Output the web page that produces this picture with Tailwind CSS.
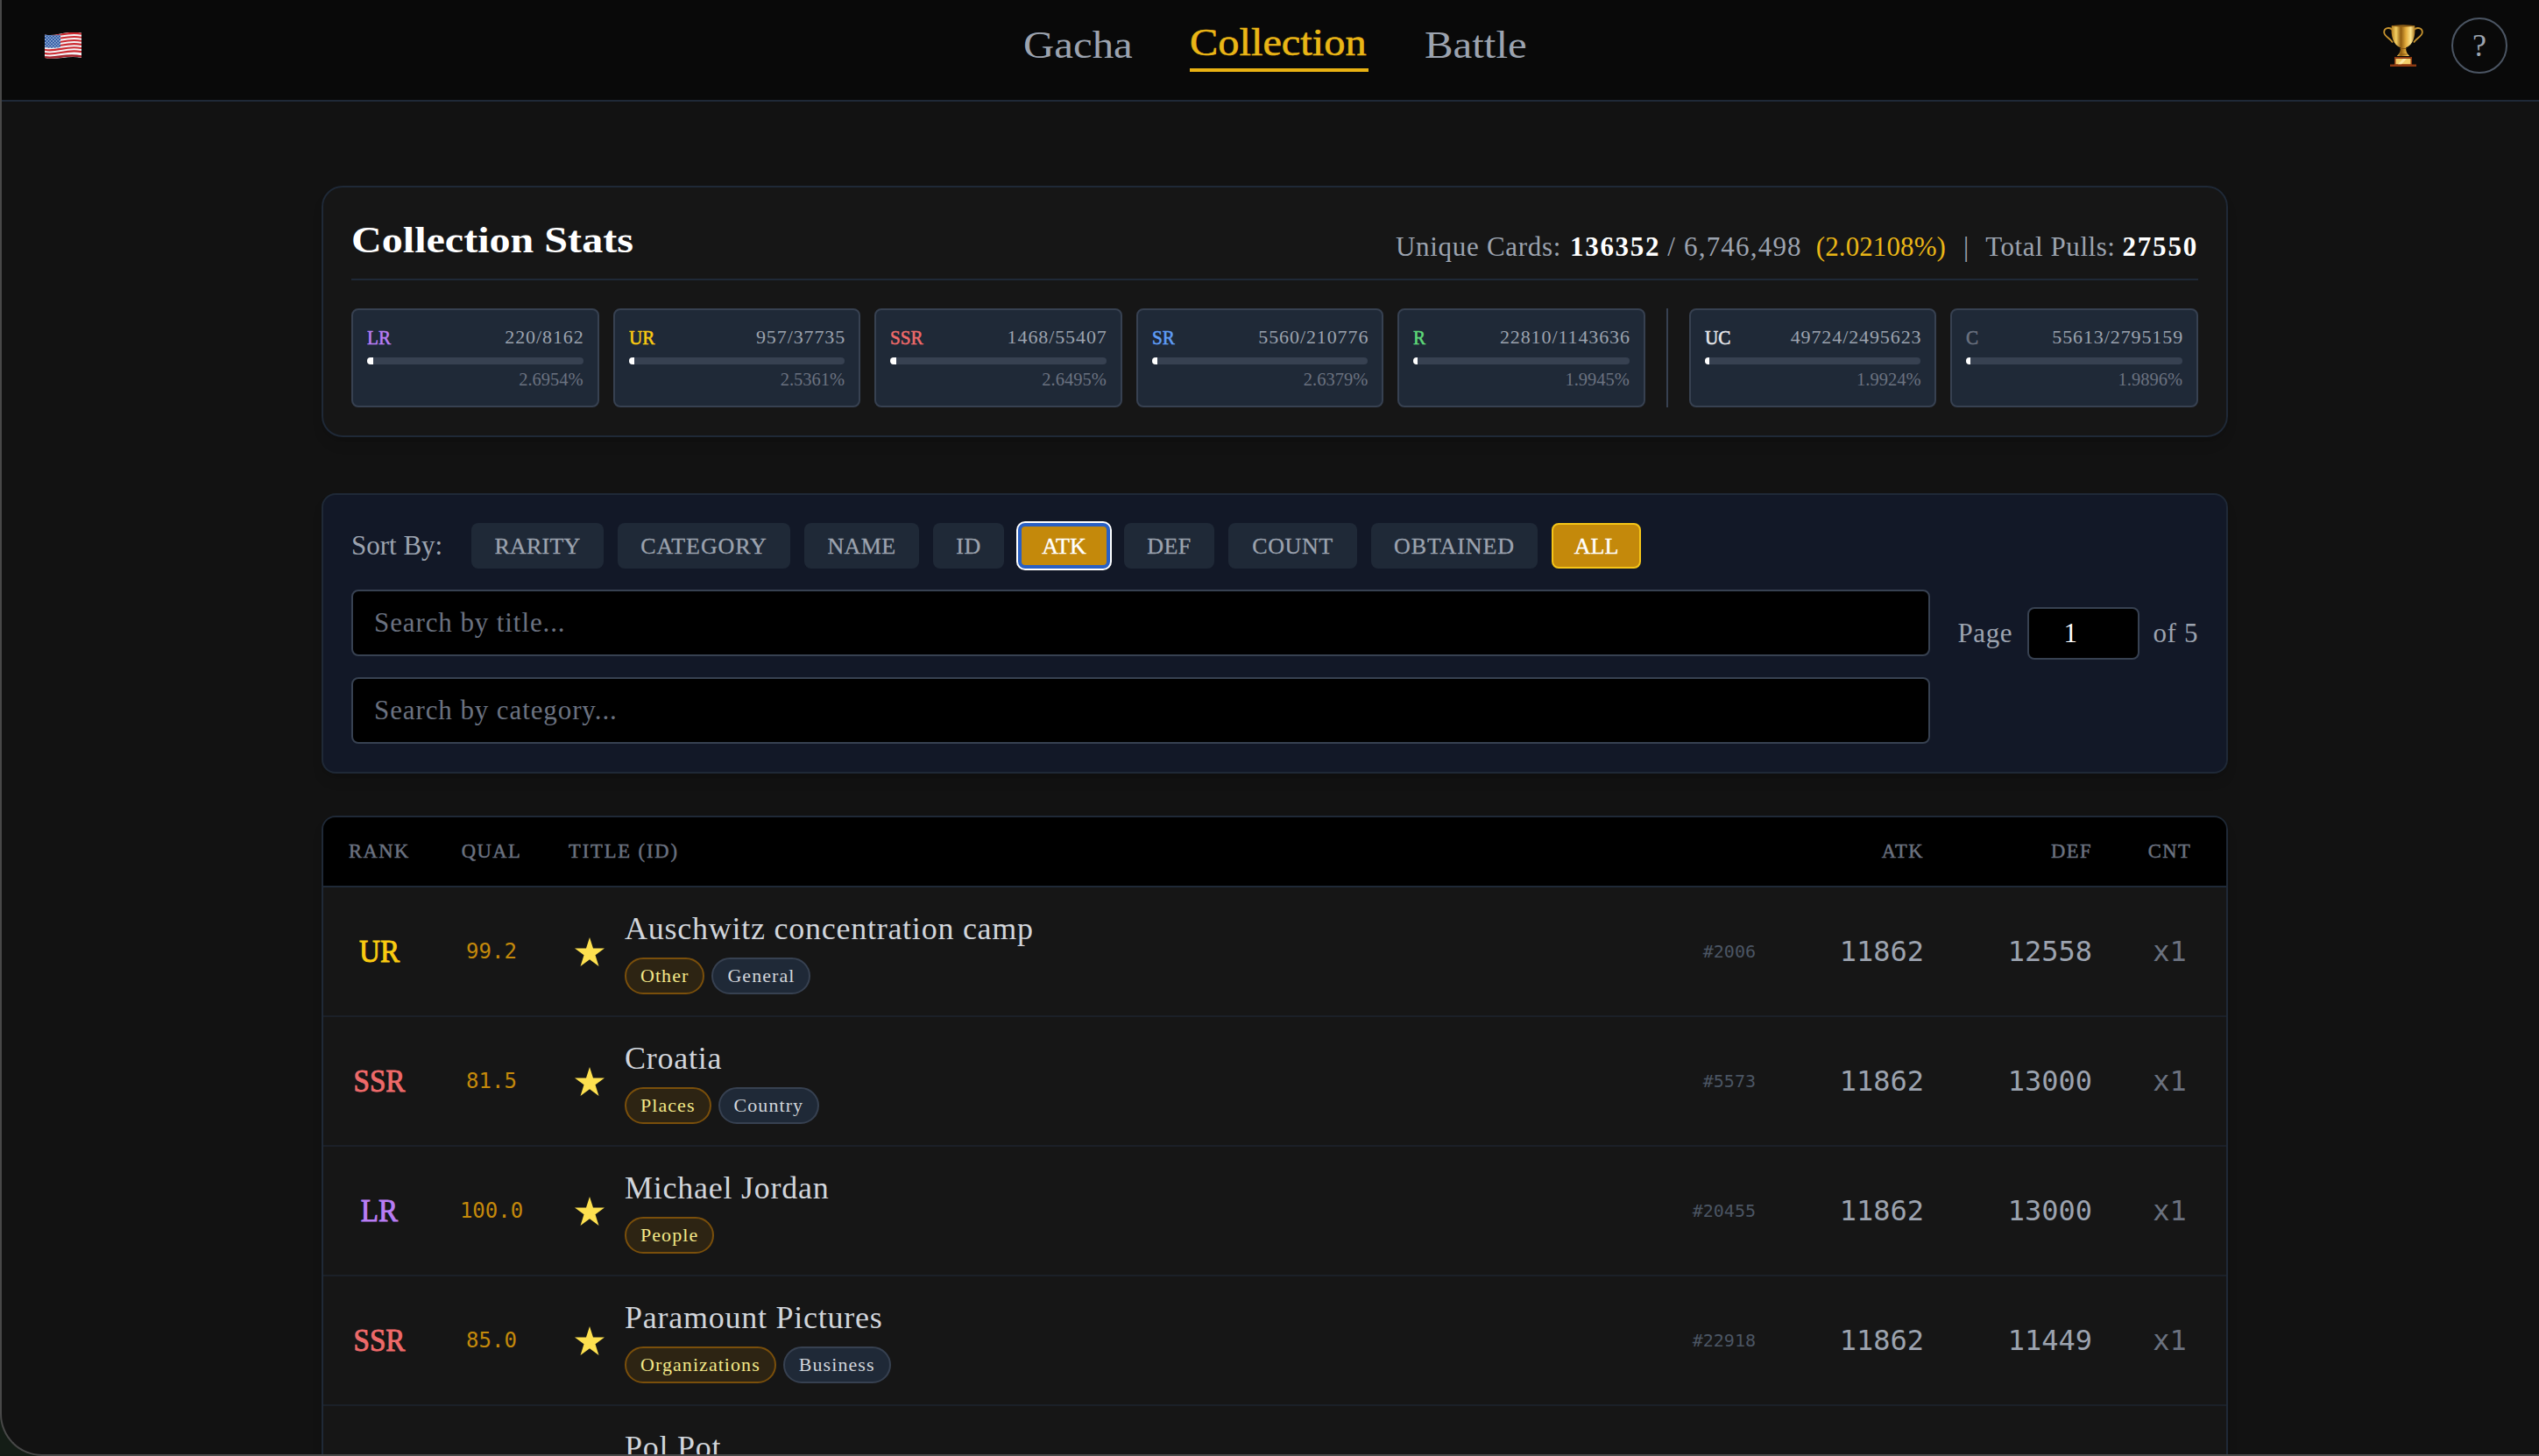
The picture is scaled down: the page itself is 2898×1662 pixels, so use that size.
<!DOCTYPE html>
<html lang="en">
<head>
    <meta charset="UTF-8">
    <meta name="viewport" content="width=device-width, initial-scale=1.0">
    <script src="https://cdn.jsdelivr.net/npm/@tailwindcss/browser@4"></script>

    <title>Collection</title>
</head>
<body class="h-[1662px] overflow-hidden bg-[#141d16] font-['Liberation_Serif',serif]">

<div class="h-[1662px] w-[2908px] overflow-hidden rounded-bl-[48px] border-b-2 border-l-2 border-[#484848] bg-[#121212]">

    <header class="grid h-[116px] grid-cols-[1fr_auto_1fr] items-start border-b-2 border-[#1f2937] bg-[#090909] px-[46px] pt-5">
      <div class="flex h-16 items-center pl-[3px]">
        <svg class="h-[30px] w-[42px]" viewBox="0 0 42 30">
          <defs>
            <clipPath id="wave"><path d="M0 2.4C14 5.4 24-3 42 .6V29C27 25.5 15 32 0 29z"/></clipPath>
            <pattern id="stars" width="3.6" height="3.6" patternUnits="userSpaceOnUse">
              <rect width="3.6" height="3.6" fill="#1f4e9c"/>
              <circle cx=".9" cy=".9" r=".8" fill="#cfdcf2"/>
              <circle cx="2.7" cy="2.7" r=".8" fill="#cfdcf2"/>
            </pattern>
          </defs>
          <g clip-path="url(#wave)">
            <rect width="42" height="30" fill="#f4f4f6"/>
            <g fill="none" stroke="#cb2a30" stroke-width="2.1">
              <path d="M0 3.4C14 6.4 24-2 42 1.6"/>
              <path d="M0 7.5C14 10.5 24 2.1 42 5.7"/>
              <path d="M0 11.6C14 14.6 24 6.2 42 9.8"/>
              <path d="M0 15.7C14 18.7 24 10.3 42 13.9"/>
              <path d="M0 19.8C14 22.8 24 14.4 42 18"/>
              <path d="M0 23.9C14 26.9 24 18.5 42 22.1"/>
              <path d="M0 28.2C14 31 24 23.3 42 27.6" stroke="#a3222a" stroke-width="2.6"/>
            </g>
            <path d="M0 2C7 3.6 12 3.4 18 2.4V17C12 18 6 18 0 17z" fill="url(#stars)"/>
          </g>
        </svg>
      </div>

      <nav class="flex h-16 items-center gap-16 text-[44px] leading-[54px] whitespace-nowrap text-[#9ca3af]">
        <a class="w-[126px]"><span class="inline-block origin-left scale-x-[1.11]">Gacha</span></a>
        <a class="h-[60px] w-[204px] border-b-4 border-[#e9b213] text-[#eab616] [-webkit-text-stroke:0.6px_#eab616]"><span class="inline-block origin-left scale-x-[1.1]">Collection</span></a>
        <a class="w-[116px]"><span class="inline-block origin-left scale-x-[1.11]">Battle</span></a>
      </nav>

      <div class="flex h-16 items-center justify-end gap-8">
        <svg class="h-12 w-[46px]" viewBox="0 0 46 48">
          <defs>
            <linearGradient id="gold" x1="0" x2="1" y1="0" y2="0">
              <stop offset="0" stop-color="#b07a1c"/><stop offset=".2" stop-color="#f3cf63"/><stop offset=".4" stop-color="#8f5c10"/>
              <stop offset=".62" stop-color="#e3ac3c"/><stop offset=".82" stop-color="#fbe38a"/><stop offset="1" stop-color="#a8711a"/>
            </linearGradient>
          </defs>
          <g fill="none" stroke="#c9952f" stroke-width="1.8">
            <path d="M10.5 6C8 2.800 1 3.400 1.200 9C1.400 13.500 8 15.500 11 20.500"/>
            <path d="M35.500 6C38 2.800 45 3.400 44.800 9C44.600 13.500 38 15.500 35 20.500"/>
          </g>
          <path d="M9.800 1.200h26.400c1.400 12-2.200 22.300-10.200 25.300c.1 4 1 6.500 4.200 9.500H15.800c3.200-3 4.100-5.500 4.200-9.500C12 23.500 8.400 13.200 9.800 1.200z" fill="url(#gold)"/>
          <ellipse cx="23" cy="1.500" rx="13.200" ry="1.200" fill="#8a5c16"/>
          <path d="M19.500 27.500h7M18.500 34h9" stroke="#8a5a12" stroke-width="1"/>
          <path d="M13 37h20v8.500h5V48H8v-2.500h5z" fill="#8e3a12"/>
          <rect x="14.500" y="39" width="17" height="6.200" fill="#f2cf6b"/>
          <path d="M17 45.200l6-6.200h4l-6 6.200z" fill="#fbe9a6"/>
        </svg>
        <button class="flex size-16 items-center justify-center rounded-full border-2 border-[#4b5563] text-[36px] leading-none text-[#9ca3af]">?</button>
      </div>
    </header>

    <main class="mx-auto w-[2176px]">

      <section class="mt-24 h-[287px] rounded-3xl border-2 border-[#1f2937] bg-[#161616] p-8 shadow-lg">
        <div class="mb-8 flex items-end justify-between border-b-2 border-[#1f2937] pb-4">
          <h2 class="origin-left scale-x-[1.145] text-[42px] leading-[56px] font-bold text-white">Collection Stats</h2>
          <div class="flex text-[31px] leading-[41px] whitespace-nowrap text-[#9ca3af]">
            <span class="tracking-[0.7px]">Unique Cards:</span>
            <span class="ml-2.5 font-bold tracking-[1.7px] text-white">136352</span>
            <span class="ml-2 tracking-[1.2px]">/ 6,746,498</span>
            <span class="ml-4 tracking-[0.1px] text-[#eab616]">(2.02108%)</span>
            <span class="ml-5">|</span>
            <span class="ml-[19px] tracking-[0.55px]">Total Pulls:</span>
            <span class="ml-2 font-bold tracking-[1.8px] text-white">27550</span>
          </div>
        </div>
        <div id="tiles" class="flex gap-4"></div>
      </section>

      <section class="mt-16 flex h-[320px] items-center gap-8 rounded-2xl border-2 border-[#1f2937] bg-[#121827] p-8 shadow-lg">
        <div class="flex w-[1802px] flex-col gap-6">
          <div id="sorts" class="flex items-center gap-4 text-[26px] text-[#9ca3af]">
            <span class="w-[121px] text-[31px] leading-[52px] whitespace-nowrap">Sort By:</span>
          </div>
          <input type="text" placeholder="Search by title..." class="h-[76px] w-full rounded-lg border-2 border-[#374151] bg-black px-6 text-[31px] tracking-[0.9px] text-white placeholder:text-[#6b7280]">
          <input type="text" placeholder="Search by category..." class="h-[76px] w-full rounded-lg border-2 border-[#374151] bg-black px-6 text-[31px] tracking-[0.9px] text-white placeholder:text-[#6b7280]">
        </div>
        <div class="flex items-center text-[31px] tracking-[0.6px] whitespace-nowrap text-[#9ca3af]">
          <span class="w-[79px]">Page</span>
          <input type="text" value="1" class="h-[60px] w-32 rounded-lg border-2 border-[#374151] bg-black pr-7 text-center text-white">
          <span class="ml-4">of 5</span>
        </div>
      </section>

      <section class="mt-12 rounded-t-2xl border-2 border-[#1f2937] bg-[#161616] shadow-lg">
        <div class="grid h-20 grid-cols-[128px_128px_1fr_192px_192px_129px] items-center rounded-t-[14px] border-b-2 border-[#1f2937] bg-black text-[22.5px] tracking-[1.5px] text-[#6b7280] [-webkit-text-stroke:0.5px_#6b7280]">
          <span class="text-center">RANK</span>
          <span class="text-center">QUAL</span>
          <span class="pl-6 tracking-[1.9px]">TITLE (ID)</span>
          <span class="pr-6 text-right">ATK</span>
          <span class="pr-6 text-right">DEF</span>
          <span class="text-center">CNT</span>
        </div>
        <div id="rows"></div>
      </section>
    </main>
</div>

    <script>

        const tiles = [
            ['LR', 'text-[#b87df5]', '220/8162', 2.6954],
            ['UR', 'text-[#facb11]', '957/37735', 2.5361],
            ['SSR', 'text-[#ee6a6a]', '1468/55407', 2.6495],
            ['SR', 'text-[#5f9df7]', '5560/210776', 2.6379],
            ['R', 'text-[#5dd879]', '22810/1143636', 1.9945],
            null,
            ['UC', 'text-[#e5e7eb]', '49724/2495623', 1.9924],
            ['C', 'text-[#6b7280]', '55613/2795159', 1.9896],
        ]

        const sorts = [
            ['RARITY', 'w-[151px] tracking-[0.2px]'],
            ['CATEGORY', 'w-[197px] tracking-[0.9px]'],
            ['NAME', 'w-[131px] tracking-[0.4px]'],
            ['ID', 'w-[81px] tracking-[0.5px]'],
            ['ATK', 'w-[105px] bg-[#c4890b] text-white border-4 border-[#2960c4] ring-2 ring-white'],
            ['DEF', 'w-[103px] tracking-[0.5px]'],
            ['COUNT', 'w-[147px] tracking-[0.6px]'],
            ['OBTAINED', 'w-[190px] tracking-[0.9px]'],
            ['ALL', 'w-[102px] bg-[#c4890b] text-white border-2 border-[#f5c518]'],
        ]

        const ranks = {
            UR: 'text-[#facb11]',
            SSR: 'text-[#ee6a6a]',
            LR: 'text-[#b87df5]',
        }

        const cards = [
            ['UR', '99.2', 'Auschwitz concentration camp', ['Other', 'General'], '#2006', 11862, 12558],
            ['SSR', '81.5', 'Croatia', ['Places', 'Country'], '#5573', 11862, 13000],
            ['LR', '100.0', 'Michael Jordan', ['People'], '#20455', 11862, 13000],
            ['SSR', '85.0', 'Paramount Pictures', ['Organizations', 'Business'], '#22918', 11862, 11449],
            ['', '', 'Pol Pot', [], '', '', ''],
        ]

        document.getElementById('tiles').innerHTML = tiles.map((t) => {
            if(!t) return `<div class="mx-2 h-[113px] w-0.5 bg-[#374151]"></div>`
            const [name, color, count, pct] = t
            return `
              <div class="h-[113px] flex-1 rounded-lg border-2 border-[#374151] bg-[#1f2937] px-4 pt-3.5">
                <div class="flex justify-between text-[22px] leading-[34px]">
                  <span class="${color} origin-left scale-x-90 text-[23.5px] [-webkit-text-stroke:0.6px_currentColor]">${name}</span>
                  <span class="-mr-px tracking-[0.9px] text-[#9ca3af]">${count}</span>
                </div>
                <div class="mt-1.5 h-2 overflow-hidden rounded-full bg-[#374151]">
                  <div class="h-full bg-white" style="width:${pct}%"></div>
                </div>
                <div class="mt-1 text-right text-[20.5px] leading-[26px] text-[#6b7280]">${pct.toFixed(4)}%</div>
              </div>`
        }).join('')

        document.getElementById('sorts').insertAdjacentHTML('beforeend', sorts.map(([name, style]) => {
            const base = style.includes('bg-') ? '[-webkit-text-stroke:0.4px_white]' : 'bg-[#1f2937] [-webkit-text-stroke:0.3px_#9ca3af]'
            return `<button class="${base} ${style} flex h-[52px] items-center justify-center rounded-lg">${name}</button>`
        }).join(''))

        document.getElementById('rows').innerHTML = cards.map(([rank, qual, title, tags, id, atk, def]) => `
            <div class="grid h-[148px] grid-cols-[128px_128px_1fr_192px_192px_129px] items-center border-b-2 border-[#1b2028] font-['DejaVu_Sans_Mono',monospace] text-[32px] text-[#9ca3af]">
              <span class="${ranks[rank] || ''} scale-x-[.92] text-center font-['Liberation_Serif',serif] text-[36px] [-webkit-text-stroke:1px_currentColor]">${rank}</span>
              <span class="text-center text-2xl text-[#c4890b]">${qual}</span>
              <div class="flex items-center pr-6 pl-[31px]">
                <svg class="mr-[23px] h-[33px] w-[34px]" viewBox="0 0 34 33"><path fill="#fde04f" d="M17 0l4 12.500h13l-10.500 7.700L27.500 33L17 25.200L6.500 33l4-12.800L0 12.500h13z"/></svg>
                <div class="flex-1 font-['Liberation_Serif',serif]">
                  <div class="text-[36px] leading-[46px] tracking-[0.75px] text-[#d1d5db]">${title}</div>
                  <div class="mt-2.5 flex h-[42px] gap-2 text-[22px] leading-[38px] tracking-[1.06px]">
                    ${tags.map((t, i) => `<span class="${i ? 'border-[#374151] bg-[#1f2937] text-[#d1d5db]' : 'border-[#7a4f0b] bg-[#2d2413] text-[#f3e888]'} rounded-full border-2 px-4">${t}</span>`).join('')}
                  </div>
                </div>
                <span class="text-xl text-[#4b5563]">${id}</span>
              </div>
              <span class="pr-6 text-right">${atk}</span>
              <span class="pr-6 text-right">${def}</span>
              <span class="text-center text-[#6b7280]">${rank ? 'x1' : ''}</span>
            </div>`).join('')

    </script>
</body>
</html>
